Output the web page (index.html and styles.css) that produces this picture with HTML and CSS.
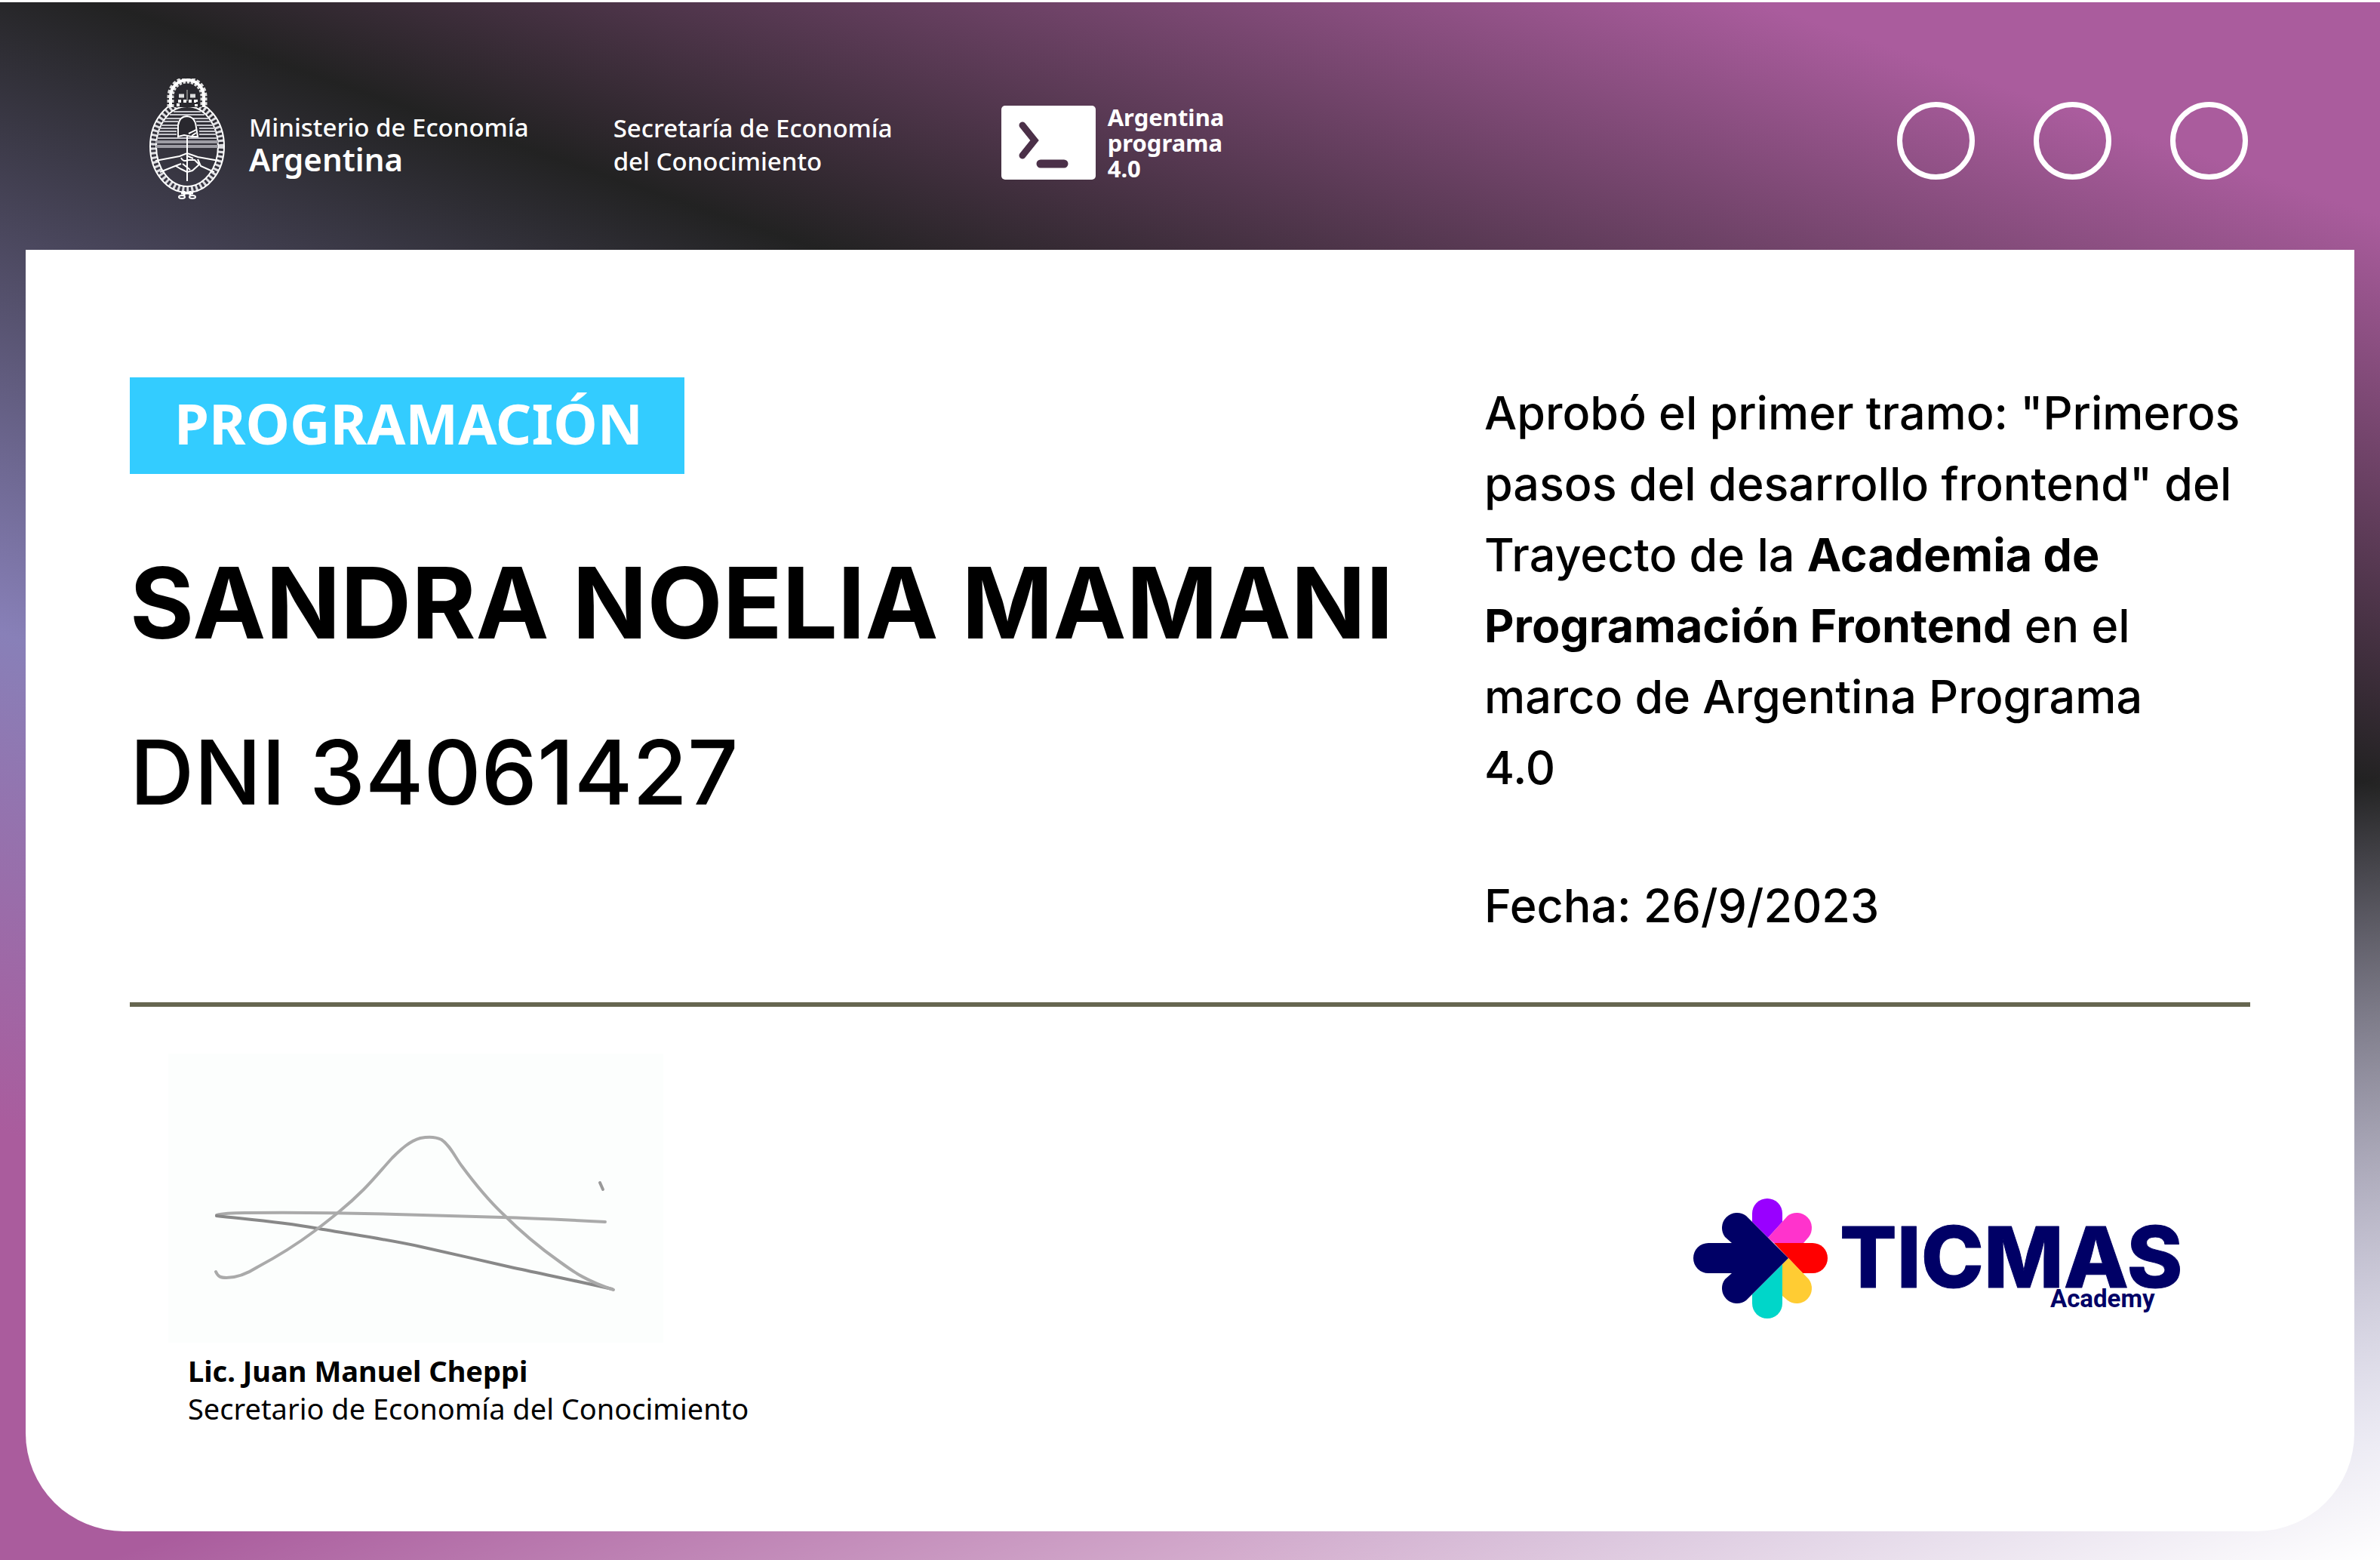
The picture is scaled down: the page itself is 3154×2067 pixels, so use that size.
FILE: index.html
```html
<!DOCTYPE html>
<html lang="es">
<head>
<meta charset="utf-8">
<meta name="viewport" content="width=device-width, initial-scale=1">
<title>Certificado - Argentina Programa 4.0</title>
<link rel="stylesheet" href="styles.css">
</head>
<body>
<main class="certificate">
  <header class="header">
    <div class="ministry">
      <svg class="crest" viewBox="0 0 100 160" fill="none" stroke="#fff" aria-hidden="true">
        <!-- laurel wreath -->
        <ellipse cx="50" cy="90" rx="45" ry="57" stroke="#dcdce0" stroke-width="8" stroke-dasharray="3 3"/>
        <ellipse cx="50" cy="90" rx="49" ry="61" stroke-width="2"/>
        <ellipse cx="50" cy="90" rx="41" ry="53" stroke-width="2"/>
        <!-- upper field -->
        <g stroke="#c4c4ca" stroke-width="2">
          <path d="M32 44H68M27 48H73M22 53H78M18 57H38M62 57H82M15 62H37M63 62H85M13 66H37M66 66H87M12 70H36M66 70H88M10 74H36M66 74H90M10 79H90"/>
          <path d="M9 84H91M9 90H91" stroke-width="4" stroke="#9d9ca4"/>
        </g>
        <!-- sun -->
        <path d="M28 38V24A22 22 0 0 1 72 24V38Z" fill="#29282e" stroke="none"/>
        <path d="M28 38V24A22 22 0 0 1 72 24V38" stroke="#ddd" stroke-width="9" stroke-dasharray="4 2"/>
        <path d="M28 38V24A22 22 0 0 1 72 24V38" stroke-width="4"/>
        <path d="M38 37V30H62V37" stroke-width="4" stroke-dasharray="4 3"/>
        <path d="M39 23H46M54 23H61" stroke-width="5" stroke="#ddd"/>
        <path d="M50 15V30" stroke-width="2" stroke="#777"/>
        <!-- cap and pike -->
        <path d="M38 77V62Q40 50 50 50Q61 51 62 65L64 77H56L46 75Z" fill="#29282e" stroke-width="2"/>
        <path d="M52 73L62 68M56 76L62 72" stroke-width="2"/>
        <path d="M50 77V136" stroke-width="2"/>
        <!-- clasped hands -->
        <path d="M8 109L40 103L50 99L64 104L92 109M14 124L34 116L42 113M86 124L68 116L64 107M42 105Q44 111 52 108L60 108L66 114L57 122L50 124L42 120L35 116M44 113L54 121M49 102L58 106" stroke-width="2"/>
        <!-- ribbon -->
        <path d="M46 149V155M54 149V155M42 152H58" stroke-width="3"/>
        <ellipse cx="43" cy="157" rx="4" ry="2" stroke-width="2"/>
        <ellipse cx="57" cy="157" rx="4" ry="2" stroke-width="2"/>
      </svg>
      <p class="ministry-name">Ministerio de Economía<strong class="country">Argentina</strong></p>
    </div>
    <p class="secretariat">Secretaría de Economía<br>del Conocimiento</p>
    <div class="program">
      <svg class="program-icon" viewBox="0 0 125 98" fill="none" stroke="#4b3048" stroke-linecap="round" stroke-linejoin="round" aria-hidden="true">
        <rect width="125" height="98" rx="5" fill="#fff" stroke="none"/>
        <path d="M28 26L44 46L28 66" stroke-width="9" stroke-linejoin="miter"/>
        <path d="M52 77H83" stroke-width="11"/>
      </svg>
      <p class="program-name">Argentina<br>programa<br>4.0</p>
    </div>
    <div class="dots" aria-hidden="true">
      <span class="dot"></span><span class="dot"></span><span class="dot"></span>
    </div>
  </header>

  <article class="card">
    <div class="summary">
      <div class="person">
        <p class="badge">PROGRAMACIÓN</p>
        <h1 class="name">SANDRA NOELIA MAMANI</h1>
        <p class="dni">DNI 34061427</p>
      </div>
      <div class="detail">
        <p>Aprobó el primer tramo: "Primeros<br>pasos del desarrollo frontend" del<br>Trayecto de la <strong>Academia de<br>Programación Frontend</strong> en el<br>marco de Argentina Programa<br>4.0</p>
        <p class="date">Fecha: 26/9/2023</p>
      </div>
    </div>
    <hr class="rule">
    <footer class="footer">
      <div class="signer">
        <svg class="signature" viewBox="0 0 656 383" fill="none" stroke-linecap="round" aria-label="Firma" role="img">
          <path d="M64 214C75 211 90 211 102 211Q202 210 302 213T443 217T579 223" stroke="#aaa" stroke-width="4"/>
          <path d="M64 215C110 220 150 223 194 231C245 240 290 246 335 256C380 266 410 273 454 283C500 293 540 301 588 312" stroke="#888" stroke-width="4"/>
          <path d="M63 289C66 296 70 297 77 297C90 297 104 292 118 283C148 267 170 253 194 235C206 226 216 218 227 209C238 200 249 190 259 180C273 166 285 151 297 138C309 126 320 116 334 112C344 110 354 110 362 114C373 121 380 137 389 149C406 172 422 192 443 212C465 234 492 257 519 276C538 290 556 302 590 313" stroke="#aaa" stroke-width="4"/>
          <path d="M572 171L576 180" stroke="#999" stroke-width="4"/>
        </svg>
        <p class="signer-name">Lic. Juan Manuel Cheppi</p>
        <p class="signer-role">Secretario de Economía del Conocimiento</p>
      </div>
      <svg class="ticmas" viewBox="0 0 660 160" role="img" aria-label="TICMAS Academy">
        <path fill="#90f" d="M78 32V21A20 20 0 0 1 118 21V32L99 53Z"/>
        <path fill="#f3c" d="M99 53L125 24A20 20 0 0 1 153 52L146 60H107Z"/>
        <path fill="red" d="M107 60H158A20 20 0 0 1 158 100H145L126 80Z"/>
        <path fill="#fc3" d="M126 80L118 88V130L125 136A20 20 0 0 0 153 108Z"/>
        <path fill="#00d6c9" d="M118 88V140A20 20 0 0 1 78 140V128Z"/>
        <path fill="#006" d="M70 24L126 80L70 136A20 20 0 0 1 42 108L51 100H20A20 20 0 0 1 20 60H51L42 52A20 20 0 0 1 70 24Z"/>
        <text class="ticmas-word" x="194" y="119">TICMAS</text>
        <text class="ticmas-sub" x="473" y="145">Academy</text>
      </svg>
    </footer>
  </article>
</main>
</body>
</html>
```
FILE: styles.css
```css
* {
  box-sizing: border-box;
}

body {
  margin: 0;
  padding-top: 3px;
  background: #fff;
  color: #000;
  font-family: Inter, "Liberation Sans", sans-serif;
}

p,
h1 {
  margin: 0;
}

.certificate {
  padding: 0 34px 38px;
  background:
    linear-gradient(161deg, rgba(255, 255, 255, 0) 67%, #fff 100%),
    linear-gradient(19deg, #aa5c9d 18%, #8880b8 39%, #222 67%, #aa5c9d 91%);
}

/* header */

.header {
  display: flex;
  align-items: center;
  padding: 101px 141px 67px 164px;
  color: #fff;
  font-family: "Noto Sans", "Open Sans", sans-serif;
  font-size: 33px;
  font-weight: 500;
  line-height: 44px;
}

.ministry {
  display: flex;
  align-items: center;
  gap: 32px;
  margin-right: 112px;
}

.crest {
  width: 100px;
  height: 160px;
}

.ministry-name {
  padding-top: 10px;
}

.country {
  display: block;
  font-size: 42px;
  font-weight: 600;
  line-height: 40px;
}

.secretariat {
  margin-right: 144px;
  padding-top: 16px;
}

.program {
  display: flex;
  align-items: center;
  gap: 16px;
  padding-top: 10px;
}

.program-icon {
  width: 125px;
  height: 98px;
}

.program-name {
  font-size: 31px;
  font-weight: 700;
  line-height: 34px;
}

.dots {
  display: flex;
  gap: 78px;
  margin-left: auto;
  padding-top: 4px;
}

.dot {
  width: 103px;
  height: 103px;
  border: 7px solid #fff;
  border-radius: 50%;
}

/* card */

.card {
  padding: 169px 138px 138px;
  border-radius: 0 0 130px 130px;
  background: #fff;
}

.summary {
  display: grid;
  grid-template-columns: minmax(0, 1fr) 1015px;
}

.badge {
  width: fit-content;
  padding: 0 55px 6px 59px;
  background: #3cf;
  color: #fff;
  font: 700 74px/122px "Noto Sans", "Open Sans", sans-serif;
}

.name {
  margin-top: 91px;
  font-size: 130px;
  font-weight: 700;
  line-height: 160px;
}

.dni {
  margin-top: 64px;
  font-size: 118px;
  font-weight: 500;
  line-height: 160px;
}

.detail {
  font-size: 61px;
  font-weight: 500;
  line-height: 94px;
  white-space: nowrap;
}

.detail strong {
  font-weight: 700;
}

.date {
  margin-top: 89px;
}

.rule {
  height: 6px;
  margin: 81px 0 0;
  border: 0;
  background: #666650;
}

/* footer */

.footer {
  display: flex;
  align-items: center;
  justify-content: space-between;
  padding: 62px 78px 0 51px;
}

.signer {
  font: 400 38px/50px "Noto Sans", "Open Sans", sans-serif;
}

.signature {
  display: block;
  width: 656px;
  height: 383px;
  margin-bottom: 12px;
  background: #fcfefd;
}

.signer-name,
.signer-role {
  padding-left: 26px;
}

.signer-name {
  font-weight: 700;
}

.ticmas {
  width: 660px;
  height: 160px;
  margin-top: 46px;
  fill: #006;
}

.ticmas-word {
  font-size: 112px;
  font-weight: 800;
  stroke: #006;
  stroke-width: 1px;
  stroke-linejoin: round;
}

.ticmas-sub {
  font-family: Roboto, sans-serif;
  font-size: 33px;
  font-weight: 700;
}
```
